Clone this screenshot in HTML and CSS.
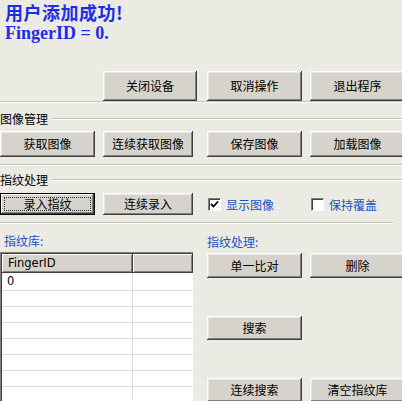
FILE: index.html
```html
<!DOCTYPE html>
<html lang="zh">
<head>
<meta charset="utf-8">
<link rel="stylesheet" href="styles.css">
</head>
<body>
<div class="app">
  <div class="status">
    <div class="status-cn">用户添加成功!</div>
    <div class="status-en">FingerID = 0.</div>
  </div>

  <div class="row row1">
    <span></span>
    <button class="btn w94">关闭设备</button>
    <button class="btn">取消操作</button>
    <button class="btn">退出程序</button>
  </div>
  <div class="etch"></div>

  <div class="group-head"><span class="group-label">图像管理</span><span class="group-line"></span></div>
  <div class="row row2">
    <button class="btn">获取图像</button>
    <button class="btn w90">连续获取图像</button>
    <button class="btn">保存图像</button>
    <button class="btn">加载图像</button>
  </div>
  <div class="etch etch2"></div>

  <div class="group-head group-head2"><span class="group-label">指纹处理</span><span class="group-line"></span></div>
  <div class="row row3">
    <button class="btn focused"><span class="focus-rect">录入指纹</span></button>
    <button class="btn w90">连续录入</button>
    <label class="check"><span class="box checked"><svg viewBox="0 0 9 9" width="9" height="9"><path d="M1 4 L3.5 6.5 L8 1.5" fill="none" stroke="#000" stroke-width="1.8"/></svg></span><span class="check-text">显示图像</span></label>
    <label class="check"><span class="box"></span><span class="check-text">保持覆盖</span></label>
  </div>
  <div class="etch etch3"></div>

  <div class="bottom">
    <div class="left">
      <div class="blue-label lib-label">指纹库:</div>
      <div class="list">
        <div class="list-head">
          <div class="th th1">FingerID</div>
          <div class="th th2"></div>
        </div>
        <div class="list-body">
          <div class="tr"><div class="td td1">0</div><div class="td td2"></div></div>
          <div class="tr"><div class="td td1"></div><div class="td td2"></div></div>
          <div class="tr"><div class="td td1"></div><div class="td td2"></div></div>
          <div class="tr"><div class="td td1"></div><div class="td td2"></div></div>
          <div class="tr"><div class="td td1"></div><div class="td td2"></div></div>
          <div class="tr"><div class="td td1"></div><div class="td td2"></div></div>
          <div class="tr"><div class="td td1"></div><div class="td td2"></div></div>
          <div class="tr"><div class="td td1"></div><div class="td td2"></div></div>
        </div>
      </div>
    </div>
    <div class="right">
      <div class="blue-label proc-label">指纹处理:</div>
      <div class="rbtns r-a">
        <button class="btn h25">单一比对</button>
        <button class="btn h25">删除</button>
      </div>
      <div class="rbtns r-b">
        <button class="btn h24">搜索</button>
      </div>
      <div class="rbtns r-c">
        <button class="btn h24">连续搜索</button>
        <button class="btn h24">清空指纹库</button>
      </div>
    </div>
  </div>
</div>
</body>
</html>
```

FILE: styles.css
```css
html, body {
  margin: 0;
  padding: 0;
  background: #ecebe3;
  overflow: hidden;
}
body {
  width: 402px;
  height: 401px;
  font-family: "Noto Sans CJK SC", "DejaVu Sans", sans-serif;
  font-size: 12px;
  color: #000;
}
.app {
  width: 402px;
}
.status {
  height: 71px;
  box-sizing: border-box;
  padding: 1px 0 0 5px;
  color: #1d2de3;
  font-weight: bold;
}
.status-cn {
  font-family: "Noto Sans CJK SC", sans-serif;
  font-size: 18px;
  line-height: 23px;
  letter-spacing: 0.5px;
}
.status-en {
  font-family: "Liberation Serif", "Noto Sans CJK SC", serif;
  font-size: 18px;
  line-height: 19px;
}
.row {
  display: grid;
  grid-template-columns: 103px 104px 103px 1fr;
  align-items: start;
}
.row1 { height: 30px; }
.row2 { height: 26px; }
.row3 { height: 22px; margin-top: 1px; }
.btn {
  display: block;
  width: 95px;
  height: 100%;
  margin: 0;
  padding: 0;
  border: none;
  background: #d6d3cc;
  font-family: "Noto Sans CJK SC", sans-serif;
  font-size: 12px;
  color: #000;
  box-shadow: inset -1px -1px #404040, inset 1px 1px #ffffff, inset -2px -2px #808080, inset 2px 2px #e8e6e0;
  text-align: center;
  line-height: 1;
  white-space: nowrap;
  overflow: hidden;
}
.w94 { width: 94px; }
.w90 { width: 90px; }
.h25 { height: 25px; }
.h24 { height: 24px; }
.btn.focused {
  box-shadow: inset 0 0 0 1px #000, inset -2px -2px #404040, inset 2px 2px #ffffff, inset -3px -3px #808080;
  padding: 4px;
}
.focus-rect {
  display: flex;
  align-items: center;
  justify-content: center;
  height: 100%;
  box-sizing: border-box;
  border: 1px dotted #303030;
}
.etch {
  border-top: 1px solid #c5c2b5;
  border-bottom: 1px solid #ffffff;
  height: 0;
}
.etch2 { margin-top: 7px; }
.etch3 { margin-top: 7px; width: 393px; }
.group-head {
  display: flex;
  align-items: center;
  height: 24px;
  margin-top: 4px;
}
.group-head2 { margin-top: 2px; }
.group-label {
  padding-right: 4px;
  line-height: 14px;
}
.group-line {
  flex: 1;
  border-top: 1px solid #c5c2b5;
  border-bottom: 1px solid #ffffff;
}
.check {
  display: flex;
  align-items: center;
  height: 22px;
  gap: 5px;
  padding-left: 1px;
}
.box {
  width: 11px;
  height: 11px;
  background: #fff;
  border-top: 1px solid #808080;
  border-left: 1px solid #808080;
  border-right: 1px solid #ffffff;
  border-bottom: 1px solid #ffffff;
  box-shadow: inset 1px 1px #404040;
  display: flex;
  align-items: center;
  justify-content: center;
}
.check-text {
  color: #1f4fc2;
}
.bottom {
  display: grid;
  grid-template-columns: 207px 1fr;
}
.blue-label {
  color: #1f4fc2;
  line-height: 14px;
}
.lib-label {
  padding: 10px 0 4px 4px;
}
.list {
  width: 193px;
  height: 160px;
  box-sizing: border-box;
  background: #fff;
  border-top: 1px solid #808080;
  border-left: 1px solid #808080;
  box-shadow: inset 1px 1px #404040;
  padding: 1px 0 0 1px;
}
.list-head {
  display: flex;
  height: 19px;
}
.th {
  box-sizing: border-box;
  height: 19px;
  background: #d6d3cc;
  box-shadow: inset -1px -1px #404040, inset 1px 1px #ffffff, inset -2px -2px #808080;
  font-family: "DejaVu Sans", "Liberation Sans", sans-serif;
  font-size: 11.5px;
  line-height: 19px;
  padding-left: 6px;
}
.th1 { width: 131px; }
.th2 { flex: 1; }
.tr {
  display: flex;
  height: 16px;
  border-bottom: 1px solid #dcdcdc;
  box-sizing: border-box;
}
.tr:first-child { height: 18px; }
.td {
  box-sizing: border-box;
  font-family: "DejaVu Sans", "Liberation Sans", sans-serif;
  font-size: 11.5px;
  line-height: 17px;
  padding-left: 5px;
}
.td1 { width: 131px; border-right: 1px solid #dcdcdc; }
.td2 { flex: 1; }
.proc-label {
  padding: 11px 0 3px 0;
}
.rbtns {
  display: grid;
  grid-template-columns: 103px 1fr;
}
.r-a { margin-top: 1px; }
.r-b { margin-top: 38px; }
.r-c { margin-top: 38px; }
```
